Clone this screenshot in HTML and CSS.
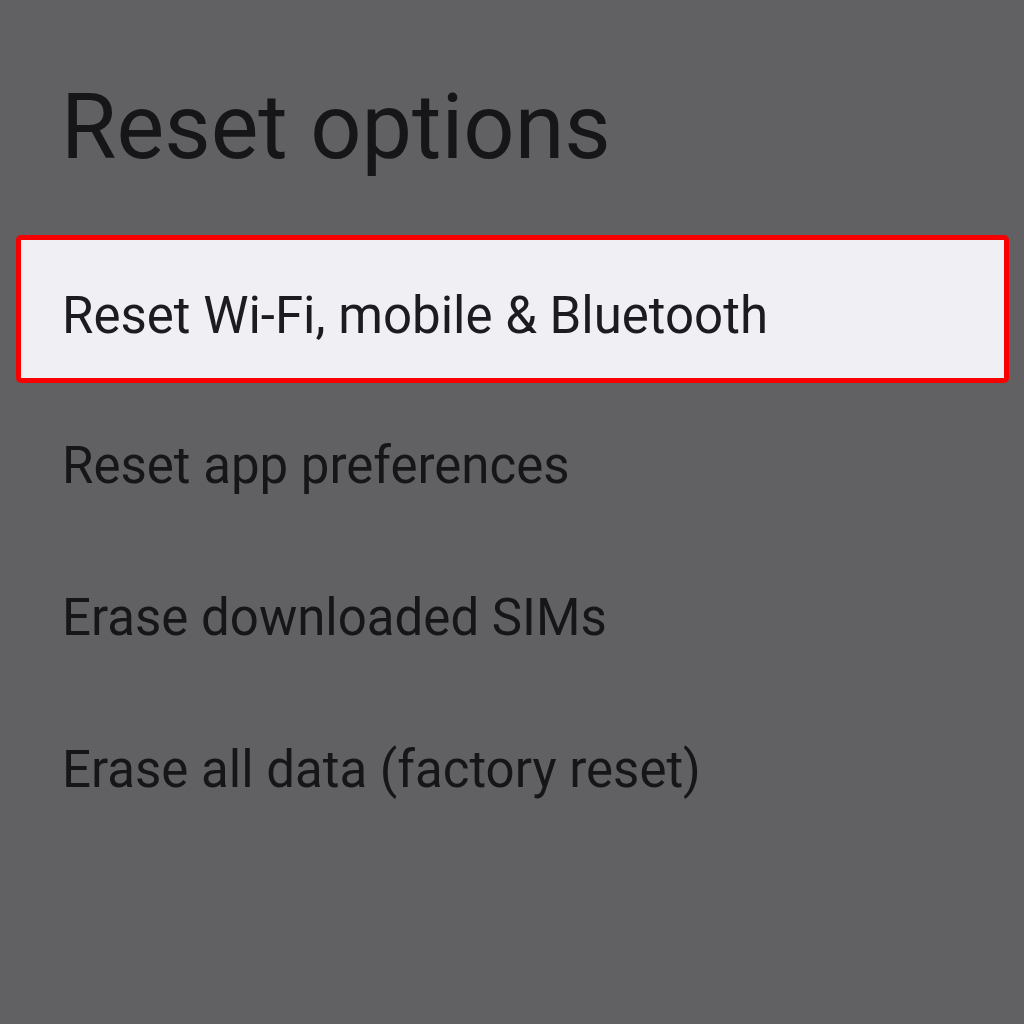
FILE: index.html
```html
<!DOCTYPE html>
<html lang="en">
<head>
<meta charset="utf-8">
<title>Reset options</title>
<link rel="stylesheet" href="styles.css">
</head>
<body>
<main class="screen">
  <h1 class="title">Reset options</h1>
  <ul class="list">
    <li class="row selected">Reset Wi-Fi, mobile &amp; Bluetooth</li>
    <li class="row">Reset app preferences</li>
    <li class="row">Erase downloaded SIMs</li>
    <li class="row">Erase all data (factory reset)</li>
  </ul>
</main>
</body>
</html>
```

FILE: styles.css
```css
html, body {
  margin: 0;
  padding: 0;
  background: #616163;
}
.screen {
  width: 1024px;
  height: 1024px;
  font-family: Roboto, "Noto Sans", sans-serif;
  color: #161618;
}
.title {
  margin: 0;
  padding: 83px 0 0 61px;
  font-size: 90px;
  font-weight: 400;
  line-height: 90px;
  height: 233px;
  box-sizing: border-box;
}
.list {
  list-style: none;
  margin: 0;
  padding: 0 15px 0 16px;
}
.row {
  height: 152px;
  box-sizing: border-box;
  display: flex;
  align-items: center;
  padding: 10px 0 0 46px;
  font-size: 51px;
  line-height: 52px;
}
.row.selected {
  height: 148px;
  margin: 2px 0;
  padding: 14px 0 0 41px;
  border: 5px solid #f80000;
  border-radius: 5px;
  background: #f0eff4;
  color: #1c1b1f;
}
```
